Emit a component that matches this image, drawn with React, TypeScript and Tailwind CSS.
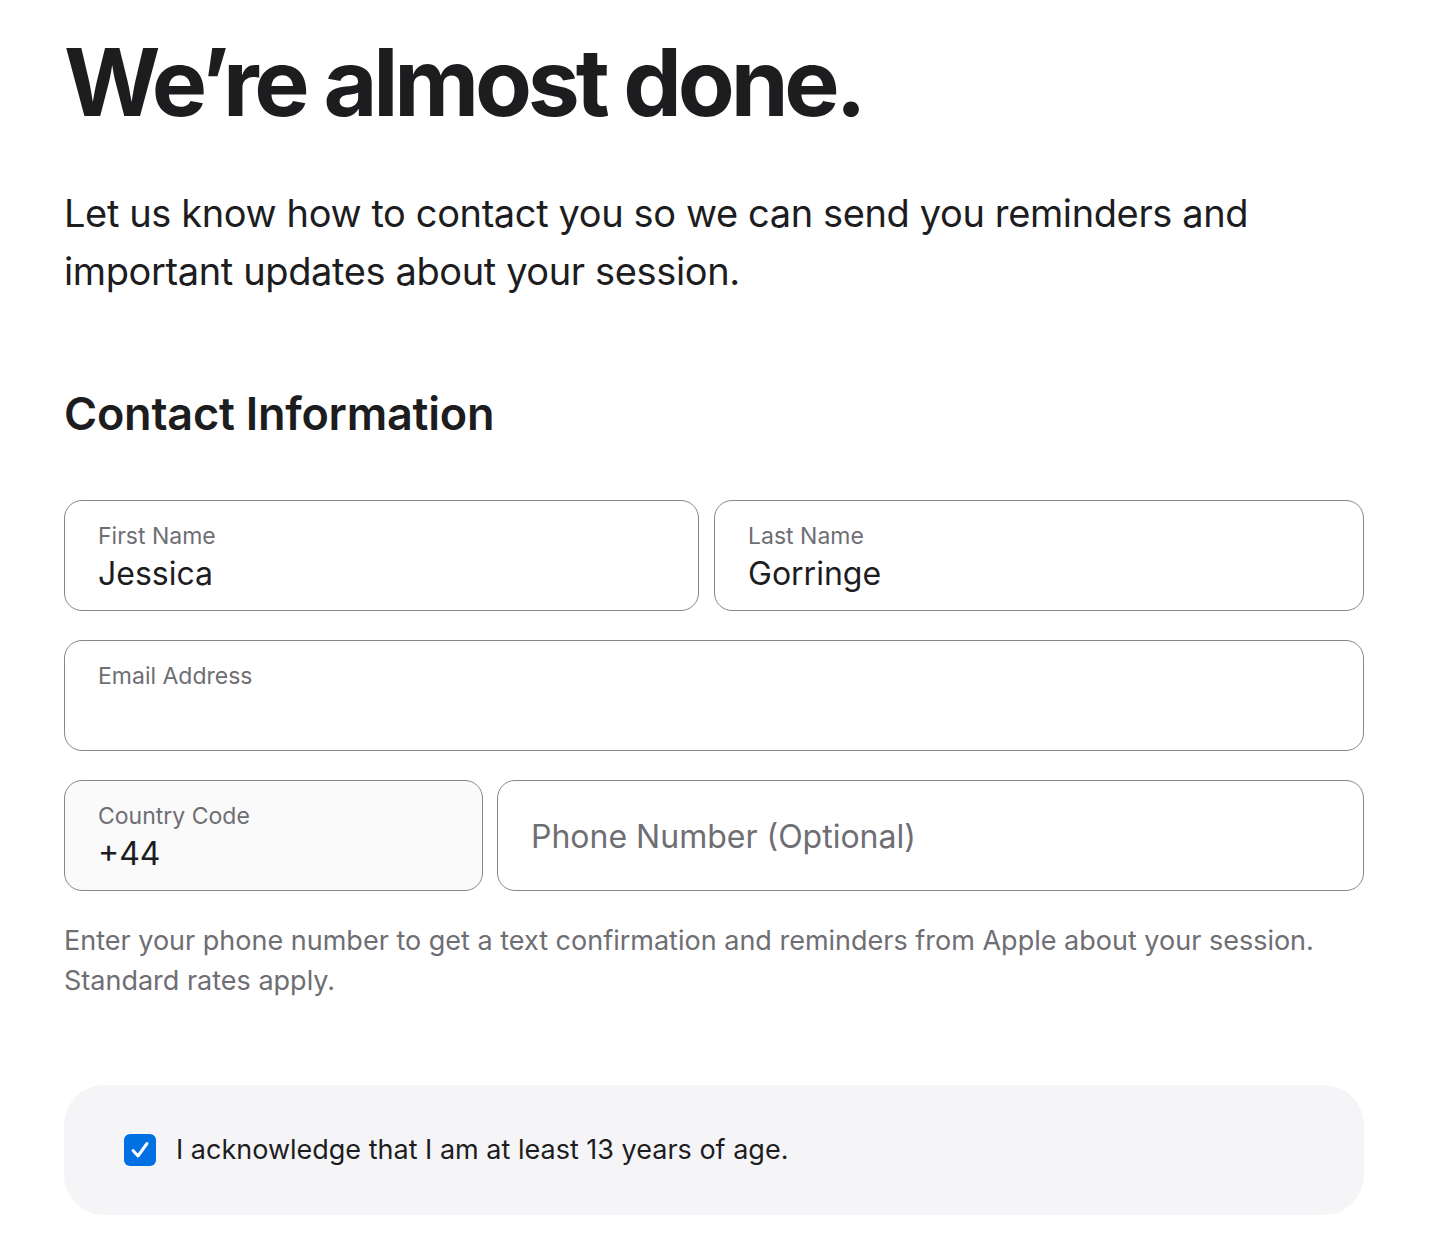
import { useState } from "react";

const FONT = { fontFamily: "Inter, 'Noto Sans', sans-serif" };

function Field({
  label,
  value,
  className = "",
}: {
  label: string;
  value?: string;
  className?: string;
}) {
  return (
    <div
      className={`flex h-[111px] flex-col justify-center rounded-[18px] border-[1.5px] border-[#86868b] px-[33px] pt-[4px] ${className}`}
    >
      <span className="text-[23px] leading-[28px] text-[#6e6e73]">{label}</span>
      <span className="mt-[4px] h-[40px] text-[32px] leading-[40px] text-[#1d1d1f]">
        {value}
      </span>
    </div>
  );
}

export default function App() {
  const [checked, setChecked] = useState(true);

  return (
    <main className="min-h-screen bg-white px-[64px] pt-[28px]" style={FONT}>
      <div className="w-[1300px]">
        <h1 className="text-[93px] font-bold leading-[108px] tracking-[-0.045em] text-[#1d1d1f]">
          We’re almost done.
        </h1>

        <p className="mt-[48px] text-[38px] leading-[58px] tracking-[-0.01em] text-[#1d1d1f]">
          Let us know how to contact you so we can send you reminders and important updates
          about your session.
        </p>

        <h2 className="mt-[86px] text-[45px] font-semibold leading-[56px] tracking-[-0.005em] text-[#1d1d1f]">
          Contact Information
        </h2>

        <div className="mt-[58px] flex flex-col gap-[29px]">
          <div className="flex gap-[15px]">
            <Field label="First Name" value="Jessica" className="w-[635px]" />
            <Field label="Last Name" value="Gorringe" className="flex-1" />
          </div>

          <Field label="Email Address" />

          <div className="flex gap-[14px]">
            <Field label="Country Code" value="+44" className="w-[419px] bg-[#fafafa]" />
            <div className="flex h-[111px] flex-1 items-center rounded-[18px] border-[1.5px] border-[#86868b] px-[33px] pt-[2px]">
              <span className="text-[32px] text-[#6e6e73]">Phone Number (Optional)</span>
            </div>
          </div>
        </div>

        <p className="mt-[30px] text-[27px] leading-[40px] text-[#6e6e73]">
          Enter your phone number to get a text confirmation and reminders from Apple about your
          session.
          <br />
          Standard rates apply.
        </p>

        <label className="mt-[84px] flex h-[130px] cursor-pointer items-center gap-[20px] rounded-[40px] bg-[#f5f5f7] px-[60px]">
          <button
            type="button"
            onClick={() => setChecked(!checked)}
            className={`flex h-[32px] w-[32px] items-center justify-center rounded-[6px] ${
              checked ? "bg-[#0071e3]" : "border-2 border-[#86868b] bg-white"
            }`}
          >
            {checked ? (
              <svg viewBox="0 0 32 32" className="h-[32px] w-[32px]" fill="none">
                <path
                  d="M9 16.5l5 5.5L23 9.5"
                  stroke="white"
                  strokeWidth="3"
                  strokeLinecap="round"
                  strokeLinejoin="round"
                />
              </svg>
            ) : null}
          </button>
          <span className="text-[27px] text-[#1d1d1f]">
            I acknowledge that I am at least 13 years of age.
          </span>
        </label>
      </div>
    </main>
  );
}
